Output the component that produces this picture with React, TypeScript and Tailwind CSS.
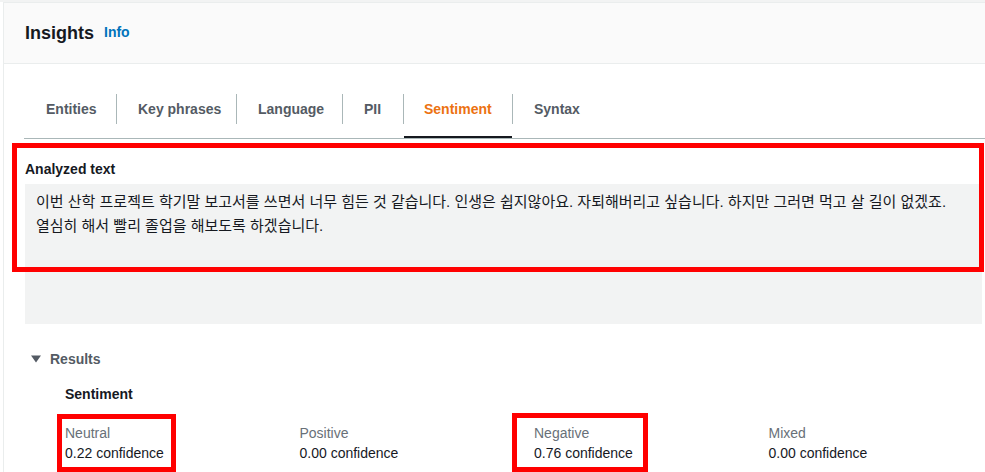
const tabs = [
  { name: 'Entities', w: 'w-[92px] pl-[22px]' },
  { name: 'Key phrases', w: 'w-[119px] pl-[21px]' },
  { name: 'Language', w: 'w-[105px] pl-[21px]' },
  { name: 'PII', w: 'w-[60px] pl-[21px]' },
  { name: 'Sentiment', w: 'w-[108px] pl-[20px]' },
  { name: 'Syntax', w: 'w-[100px] pl-[21px]' },
];

const scores = [
  { label: 'Neutral', value: '0.22' },
  { label: 'Positive', value: '0.00' },
  { label: 'Negative', value: '0.76' },
  { label: 'Mixed', value: '0.00' },
];

const App = () => {
  return (
    <div
      className="relative h-[472px] w-[985px] overflow-hidden bg-white pt-[2px] pl-[3px] text-[14px] text-[#16191f]"
      style={{ fontFamily: '"Liberation Sans", "Noto Sans CJK KR", Arial, sans-serif' }}
    >
      <div className="absolute left-0 top-0 h-[2px] w-full bg-[#f2f3f3]" />
      <div className="h-full border-l border-t border-[#eaeded]">
        {/* header */}
        <div className="flex h-[61px] items-center gap-[10px] border-b border-[#eaeded] bg-[#fafafa] pb-[1px] pl-[21px]">
          <h2 className="text-[18px] font-bold leading-[22px]">Insights</h2>
          <a className="text-[14px] font-bold text-[#0073bb]">Info</a>
        </div>

        <div className="pl-[20px] pt-[30px]">
          {/* tabs */}
          <div className="flex border-b border-[#aab7b8]">
            {tabs.map((t, i) => (
              <div key={t.name} className="flex">
                {i > 0 && <div className="h-[30px] w-px bg-[#aab7b8]" />}
                <div
                  className={
                    'h-[44px] border-b-2 whitespace-nowrap ' +
                    t.w +
                    (t.name === 'Sentiment' ? ' border-[#16191f] text-[#ec7211]' : ' border-transparent text-[#545b64]')
                  }
                >
                  <span className="block text-[14px] font-bold leading-[30px]">{t.name}</span>
                </div>
              </div>
            ))}
          </div>

          {/* analyzed text */}
          <div className="pr-[3px] pl-[1px] pt-[21px]">
            <div className="text-[14px] font-bold leading-[18px]">Analyzed text</div>
            <div className="mt-[6px] h-[140px] bg-[#f2f3f3] px-[11px] pt-[6px] text-[15px] leading-[24px] text-[#16191f]">
              이번 산학 프로젝트 학기말 보고서를 쓰면서 너무 힘든 것 같습니다. 인생은 쉽지않아요. 자퇴해버리고 싶습니다. 하지만 그러면 먹고 살 길이 없겠죠.
              <br />
              열심히 해서 빨리 졸업을 해보도록 하겠습니다.
            </div>
          </div>

          {/* results */}
          <div className="flex items-center pl-[7px] pt-[25px]">
            <svg width="10" height="8" viewBox="0 0 10 8" className="mr-[9px]">
              <path d="M0 0.5 L10 0.5 L5 7.5 Z" fill="#545b64" />
            </svg>
            <span className="text-[14px] font-bold leading-[20px] text-[#545b64]">Results</span>
          </div>
          <div className="pl-[41px] pt-[15px]">
            <div className="text-[14px] font-bold leading-[20px]">Sentiment</div>
            <div className="mt-[19px] grid w-[938px] grid-cols-4">
              {scores.map((s) => (
                <div key={s.label} className="leading-[20px]">
                  <div className="text-[#687078]">{s.label}</div>
                  <div>{s.value} confidence</div>
                </div>
              ))}
            </div>
          </div>
        </div>
      </div>

      {/* annotation boxes */}
      <div className="pointer-events-none absolute left-[12px] top-[143px] h-[129px] w-[972px] border-[5px] border-[#ff0000]" />
      <div className="pointer-events-none absolute left-[57px] top-[414px] h-[58px] w-[119px] border-[5px] border-[#ff0000]" />
      <div className="pointer-events-none absolute left-[512px] top-[413px] h-[59px] w-[136px] border-[5px] border-[#ff0000]" />
    </div>
  );
};

export default App;
